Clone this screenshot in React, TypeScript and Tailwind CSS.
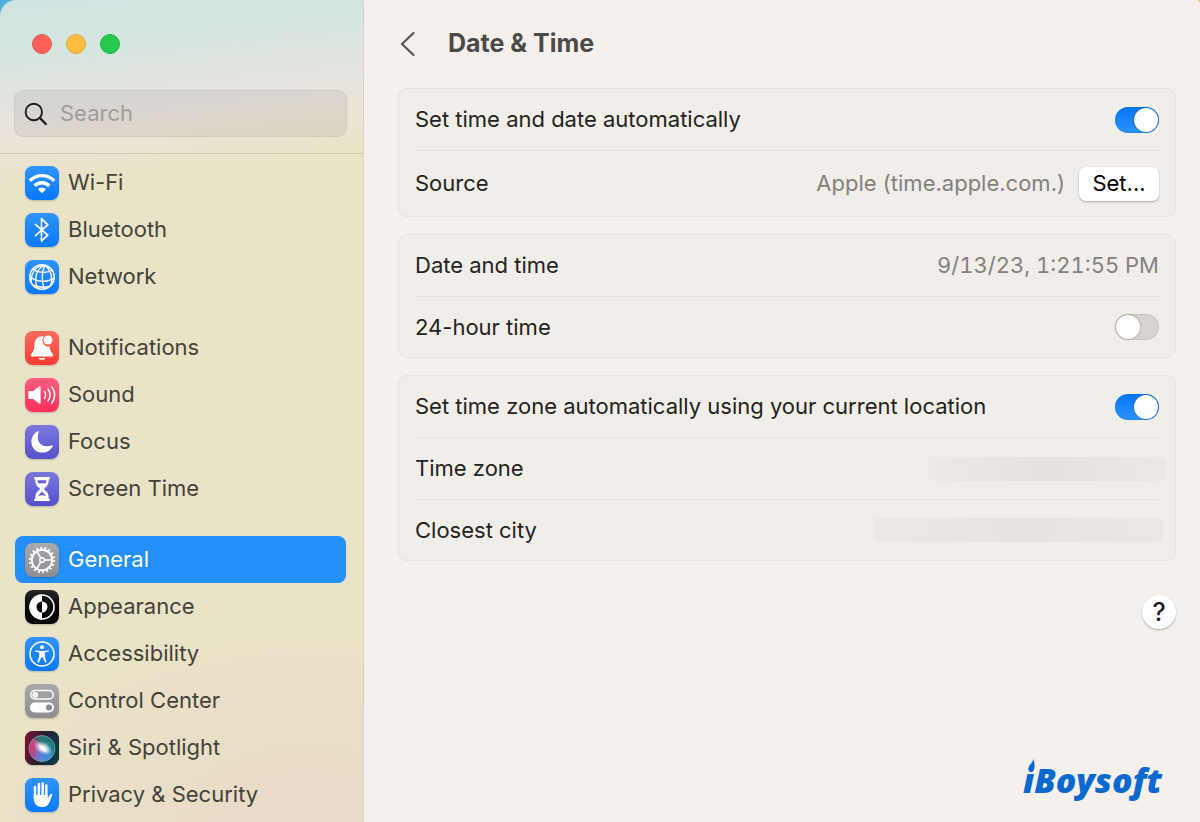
import React, { useState } from 'react';

interface NavItem {
  label: string;
  tile: string;
  icon: React.ReactNode;
}

const BLUE = 'from-[#2e93fb] to-[#0579fc]';
const RED = 'from-[#ff6a5e] to-[#fd3a30]';
const PINK = 'from-[#ff5c7f] to-[#fd2c57]';
const INDIGO = 'from-[#7b79dc] to-[#5450cc]';
const GRAY = 'from-[#a9a8ac] to-[#8e8d92]';
const BLACK = 'from-[#262626] to-[#000000]';

const WifiIcon = () => (
  <svg viewBox="0 0 34 34" className="size-full" fill="none" stroke="#fff" strokeWidth="3.4">
    <path d="M4.8 14.8a17 17 0 0 1 24.4 0" />
    <path d="M9.6 19.8a10.4 10.4 0 0 1 14.8 0" />
    <path d="M13 23.300a5.600 5.600 0 0 1 8 0L17 27.200z" fill="#fff" stroke="none" />
  </svg>
);

const BluetoothIcon = () => (
  <svg viewBox="0 0 34 34" className="size-full" fill="none" stroke="#fff" strokeWidth="1.700" strokeLinejoin="round" strokeLinecap="round">
    <path d="M10.400 11.400l12.400 10.800-6.300 6V5.600l6.300 6.200-12.400 10.800" />
  </svg>
);

const NetworkIcon = () => (
  <svg viewBox="0 0 34 34" className="size-full" fill="none" stroke="#fff" strokeWidth="1.400">
    <circle cx="17" cy="17" r="12.200" strokeWidth="1.600" />
    <path d="M20 5.400C11 8 8.500 20 12.600 28.200M20 5.400c-3.400 6-3.500 16-.8 23.500M20 5.400c6.500 5 8 14 5.600 20.300M20 5.400C12 5 6.500 11 6 21.500" />
    <path d="M8 9.300c6 4 13.500 3.700 19.600.8M4.800 16.500c7 6 17 6.300 24.200 1.600M8 25c6 2.700 12 2.800 17.600.8" />
  </svg>
);

const BellIcon = () => (
  <svg viewBox="0 0 34 34" className="size-full" fill="#fff">
    <path d="M17.500 5.200c-4.600 0-7.800 3-8 7.600-.2 5.600-1 7.400-2.800 9.400-1.400 1.500-1.200 3.300.6 3.300h19.400c1.800 0 2-1.800.6-3.300-1.500-1.700-2.400-3.200-2.700-6.800a6 6 0 0 1-5.600-9.900 9 9 0 0 0-1.500-.3z" />
    <circle cx="23" cy="9" r="4.500" />
    <path d="M13.600 26.900h6.800a3.500 2.500 0 0 1-6.800 0z" />
  </svg>
);

const SoundIcon = () => (
  <svg viewBox="0 0 34 34" className="size-full" fill="none" stroke="#fff" strokeWidth="1.500" strokeLinecap="round">
    <path d="M4.400 13h4l5.600-4.600c.8-.7 1.600-.4 1.600.5v16.200c0 .9-.8 1.200-1.600.5L8.400 21h-4c-.7 0-1-.4-1-1v-6c0-.6.3-1 1-1z" fill="#fff" stroke="none" />
    <path d="M19.400 13.300c1.500 2.300 1.500 5.100 0 7.400M23 11c2.600 3.700 2.600 8.300 0 12M26.700 8.600c3.700 5.200 3.700 11.600 0 16.800" />
  </svg>
);

const MoonIcon = () => (
  <svg viewBox="0 0 34 34" className="size-full" fill="#fff">
    <path d="M12.800 6.300c.8-.4 1.300.1 1 .9-3.600 9.500 3.300 16.300 12.800 13.200.8-.3 1.300.2.9 1C25.600 25.300 22 27.600 17.600 27.600 11.200 27.600 6.400 23 6.400 16.900c0-4.700 2.500-8.800 6.400-10.600z" />
  </svg>
);

const HourglassIcon = () => (
  <svg viewBox="0 0 34 34" className="size-full" fill="#fff">
    <path d="M10.300 5h13.400c.9 0 1.300.5 1.300 1.200s-.5 1.300-1.300 1.400c0 4.700-1.200 6.600-4 8.400-.8.500-.8 1.500 0 2 2.800 1.800 4 3.700 4 8.400.8.100 1.300.6 1.300 1.300 0 .8-.4 1.300-1.300 1.300H10.300c-.9 0-1.300-.5-1.300-1.300 0-.7.500-1.200 1.300-1.300 0-4.700 1.200-6.600 4-8.400.8-.5.8-1.500 0-2-2.800-1.800-4-3.700-4-8.400-.8-.1-1.300-.7-1.300-1.400S9.400 5 10.300 5z" />
    <path d="M12.600 8.300h8.800c-.1 1.300-.4 2.200-.9 3h-7c-.5-.8-.8-1.700-.9-3zM17 18.800c.3 1.400 1 2 2.300 3.100.9.800 1.500 1.500 1.700 2.200-2.600-1.200-5.400-1.200-8 0 .2-.7.800-1.400 1.700-2.200 1.300-1.100 2-1.700 2.300-3.100z" fill="#625fd2" />
  </svg>
);

const GearIcon = () => (
  <svg viewBox="0 0 34 34" className="size-full" fill="none" stroke="#fff">
    <circle cx="17" cy="17" r="12.200" strokeWidth="2" strokeDasharray="1.900 2.358" />
    <circle cx="17" cy="17" r="10.200" strokeWidth="1.900" />
    <circle cx="17" cy="17" r="2.300" strokeWidth="1.400" />
    <path d="M19.500 17h7M15.700 14.800l-3.600-6.200M15.700 19.200l-3.600 6.200" strokeWidth="1.600" />
  </svg>
);

const AppearanceIcon = () => (
  <svg viewBox="0 0 34 34" className="size-full">
    <circle cx="17" cy="17" r="12" fill="none" stroke="#fff" strokeWidth="1.600" />
    <path d="M17 4.600a12.400 12.400 0 0 0 0 24.800z" fill="#fff" />
    <path d="M17 11.500a5.500 5.500 0 0 0 0 11z" fill="#000" />
    <path d="M17 11.500a5.500 5.500 0 0 1 0 11z" fill="#fff" />
  </svg>
);

const AccessibilityIcon = () => (
  <svg viewBox="0 0 34 34" className="size-full" fill="#fff">
    <circle cx="17" cy="17" r="12" fill="none" stroke="#fff" strokeWidth="1.600" />
    <circle cx="17" cy="10.200" r="2" />
    <path d="M10.900 13.200c2 .6 3.800.8 6.100.8s4.100-.2 6.100-.8c1-.2 1.300 1 .4 1.400-1.200.5-2.500.8-3.800 1 0 3.500.5 5.600 1.800 9 .4 1.100-.9 1.600-1.400.6L17.400 20h-.8l-2.700 5.200c-.5 1-1.800.5-1.400-.6 1.300-3.400 1.800-5.500 1.800-9-1.300-.2-2.600-.5-3.800-1-.9-.4-.6-1.600.4-1.400z" />
  </svg>
);

const ControlCenterIcon = () => (
  <svg viewBox="0 0 34 34" className="size-full">
    <rect x="5.800" y="6.500" width="22.400" height="8.600" rx="4.300" fill="none" stroke="#fff" strokeWidth="1.500" />
    <circle cx="10.300" cy="10.800" r="2.900" fill="#fff" />
    <rect x="5" y="18.600" width="24" height="9.800" rx="4.900" fill="#fff" />
    <circle cx="24" cy="23.500" r="3.100" fill="#8e8d92" />
  </svg>
);

const SiriIcon = () => (
  <svg viewBox="0 0 34 34" className="size-full">
    <defs>
      <linearGradient id="siri-tile" x1="0" y1="0.2" x2="1" y2="0.5">
        <stop offset="0" stopColor="#7d1238" />
        <stop offset="0.5" stopColor="#2c1c30" />
        <stop offset="1" stopColor="#0b3a48" />
      </linearGradient>
      <linearGradient id="siri-orb" x1="0" y1="0.6" x2="1" y2="0.3">
        <stop offset="0" stopColor="#d8306a" />
        <stop offset="0.35" stopColor="#a75b8c" />
        <stop offset="0.65" stopColor="#3d8f9c" />
        <stop offset="1" stopColor="#12706c" />
      </linearGradient>
      <radialGradient id="siri-blue" cx="0.55" cy="0.85" r="0.5">
        <stop offset="0" stopColor="#3f8df2" />
        <stop offset="1" stopColor="#3f8df2" stopOpacity="0" />
      </radialGradient>
      <radialGradient id="siri-glow">
        <stop offset="0" stopColor="#fff" />
        <stop offset="0.3" stopColor="#fff" stopOpacity="0.85" />
        <stop offset="1" stopColor="#fff" stopOpacity="0" />
      </radialGradient>
    </defs>
    <rect width="34" height="34" rx="8" fill="url(#siri-tile)" />
    <circle cx="17" cy="17.500" r="13" fill="url(#siri-orb)" />
    <path d="M8 8C14 3 24 4 28 11c-6-1-9 1-11 6-1-5-4-7-9-9z" fill="#136a5c" opacity="0.6" />
    <circle cx="17" cy="17.500" r="13" fill="url(#siri-blue)" />
    <ellipse cx="18" cy="17" rx="10" ry="6" transform="rotate(30 18 17)" fill="url(#siri-glow)" />
    <path d="M13.500 13.500l5 2.200 3.400 5.700-5.400-2.400z" fill="#fff" opacity="0.85" />
    <circle cx="17" cy="17.500" r="13" fill="none" stroke="#7fd4d6" strokeOpacity="0.55" />
  </svg>
);

const HandIcon = () => (
  <svg viewBox="0 0 34 34" className="size-full" fill="none" stroke="#fff" strokeLinecap="round">
    <path d="M10 9v11M13.900 6v13M17.700 5.400V19M21.300 7.600V20" strokeWidth="2.500" />
    <path d="M8.750 17h13.800v3.800l2.600-4.500c.7-1.200 2.600-.5 2.100.9l-2.400 6.300c-1.400 3.700-3.800 5.500-7.500 5.500-5.400 0-8.600-3.200-8.600-8.500z" fill="#fff" stroke="none" />
  </svg>
);

const navGroups: NavItem[][] = [
  [
    { label: 'Wi-Fi', tile: BLUE, icon: <WifiIcon /> },
    { label: 'Bluetooth', tile: BLUE, icon: <BluetoothIcon /> },
    { label: 'Network', tile: BLUE, icon: <NetworkIcon /> },
  ],
  [
    { label: 'Notifications', tile: RED, icon: <BellIcon /> },
    { label: 'Sound', tile: PINK, icon: <SoundIcon /> },
    { label: 'Focus', tile: INDIGO, icon: <MoonIcon /> },
    { label: 'Screen Time', tile: INDIGO, icon: <HourglassIcon /> },
  ],
  [
    { label: 'General', tile: GRAY, icon: <GearIcon /> },
    { label: 'Appearance', tile: BLACK, icon: <AppearanceIcon /> },
    { label: 'Accessibility', tile: BLUE, icon: <AccessibilityIcon /> },
    { label: 'Control Center', tile: GRAY, icon: <ControlCenterIcon /> },
    { label: 'Siri & Spotlight', tile: BLACK, icon: <SiriIcon /> },
    { label: 'Privacy & Security', tile: BLUE, icon: <HandIcon /> },
  ],
];

interface SwitchProps {
  id: string;
  checked: boolean;
  onChange: (checked: boolean) => void;
}

const Switch: React.FC<SwitchProps> = ({ id, checked, onChange }) => (
  <input
    id={id}
    type="checkbox"
    role="switch"
    checked={checked}
    onChange={(e) => onChange(e.target.checked)}
    className="flex h-[26px] w-11 shrink-0 appearance-none items-center rounded-full bg-[#d7d3ce] px-px shadow-[inset_0_0_1px_1px_rgba(0,0,0,0.08)] before:size-6 before:rounded-full before:bg-white before:shadow-[0_0_2px_rgba(0,0,0,0.4)] checked:justify-end checked:bg-linear-to-b checked:from-[#0077f9] checked:to-[#2a91ff]"
  />
);

const Card: React.FC<{ children: React.ReactNode }> = ({ children }) => (
  <section className="divide-y divide-[#e5e1dd] rounded-[9px] border border-[#e6e2de] bg-[#f1ede8] px-4">
    {children}
  </section>
);

const rowClass = 'flex min-h-[62px] items-center justify-between gap-4 last:min-h-[60px]';

const Sidebar: React.FC = () => {
  const [selected, setSelected] = useState('General');

  return (
    <aside className="w-[364px] shrink-0 border-r border-[#d9d3c4] bg-[radial-gradient(ellipse_380px_220px_at_85%_100%,#e9dcc8_20%,#e9dcc800_100%),linear-gradient(174deg,#cfe5e2_0px,#d5e5df_50px,#e2e4de_100px,#e8e3dd_125px,#ebe4d5_150px,#e9e3c8_180px,#e9e4c7_210px)]">
      {/* Window controls */}
      <div className="flex h-[88px] items-center gap-3.5 px-8">
        <button aria-label="Close" className="size-5 rounded-full border border-[#e2574f] bg-[#ff5f57]" />
        <button aria-label="Minimize" className="size-5 rounded-full border border-[#e2a63a] bg-[#febc3e]" />
        <button aria-label="Zoom" className="size-5 rounded-full border border-[#1fb243] bg-[#25c950]" />
      </div>

      {/* Search */}
      <div className="border-b border-[#cfcab4] pt-0.5 pr-4 pb-4 pl-3.5">
        <div className="flex h-[47px] items-center gap-3 rounded-[9px] border border-black/5 bg-black/6 pr-3 pl-[9px]">
          <svg viewBox="0 0 24 24" className="size-6 shrink-0" fill="none" stroke="#1d1d1b" strokeLinecap="round">
            <circle cx="9.800" cy="10" r="8.200" strokeWidth="1.900" />
            <path d="M16 16.200l5.800 5.800" strokeWidth="2.400" />
          </svg>
          <input
            type="text"
            placeholder="Search"
            aria-label="Search"
            className="min-w-0 flex-1 bg-transparent text-[22px] text-[#454239] outline-none placeholder:text-[#a09d98]"
          />
        </div>
      </div>

      {/* Navigation */}
      <nav className="flex flex-col gap-6 pt-[5px] pr-[17px] pb-1 pl-[15px]">
        {navGroups.map((group) => (
          <ul key={group[0].label}>
            {group.map((item) => (
              <li key={item.label}>
                <button
                  onClick={() => setSelected(item.label)}
                  aria-current={selected === item.label ? 'page' : undefined}
                  className="flex h-[47px] w-full items-center gap-[9px] rounded-lg px-2.5 text-left text-[22px] text-[#454239] aria-[current=page]:bg-[#248ff8] aria-[current=page]:text-white"
                >
                  <span className={`size-[34px] shrink-0 overflow-hidden rounded-lg bg-linear-to-b shadow-[0_1px_2px_rgba(0,0,0,0.2)] ${item.tile}`}>
                    {item.icon}
                  </span>
                  {item.label}
                </button>
              </li>
            ))}
          </ul>
        ))}
      </nav>
    </aside>
  );
};

const App: React.FC = () => {
  const [autoTime, setAutoTime] = useState(true);
  const [use24Hour, setUse24Hour] = useState(false);
  const [autoZone, setAutoZone] = useState(true);

  return (
    <div className="min-h-screen bg-linear-to-r from-[#4fb0de] from-50% to-[#d9bd72] to-50% font-[Inter,'Noto_Sans',sans-serif]">
      <div className="flex min-h-screen overflow-hidden rounded-tl-2xl rounded-tr-sm">
        <Sidebar />

        <main className="flex min-w-0 flex-1 flex-col bg-[#f5f0eb] pr-6 pl-[34px] text-[22px] text-[#242321]">
          <header className="flex h-[88px] items-center gap-8">
            <button aria-label="Back">
              <svg viewBox="0 0 18 26" className="h-[26px] w-[18px]" fill="none" stroke="#5c5a57" strokeWidth="2.400" strokeLinecap="round" strokeLinejoin="round">
                <path d="M15.500 2L4 13l11.500 11" />
              </svg>
            </button>
            <h1 className="text-[25px] font-bold text-[#4c4a48]">Date &amp; Time</h1>
          </header>

          <div className="flex flex-col gap-[17px]">
            <Card>
              <div className={rowClass}>
                <label htmlFor="auto-time">Set time and date automatically</label>
                <Switch id="auto-time" checked={autoTime} onChange={setAutoTime} />
              </div>
              <div className="flex min-h-[65px] items-center justify-between gap-4">
                <span>Source</span>
                <div className="flex items-center gap-3.5">
                  <span className="text-[#84817d]">Apple (time.apple.com.)</span>
                  <button className="h-[34px] w-20 rounded-[7px] bg-white text-black shadow-[0_1px_2px_rgba(0,0,0,0.3)]">Set...</button>
                </div>
              </div>
            </Card>

            <Card>
              <div className={rowClass}>
                <span>Date and time</span>
                <span className="text-[#84817d] tabular-nums">9/13/23, 1:21:55 PM</span>
              </div>
              <div className={rowClass}>
                <label htmlFor="use-24-hour">24-hour time</label>
                <Switch id="use-24-hour" checked={use24Hour} onChange={setUse24Hour} />
              </div>
            </Card>

            <Card>
              <div className={rowClass}>
                <label htmlFor="auto-zone">Set time zone automatically using your current location</label>
                <Switch id="auto-zone" checked={autoZone} onChange={setAutoZone} />
              </div>
              <div className={rowClass}>
                <span>Time zone</span>
                <span className="-mr-2 h-6 w-60 bg-linear-to-r from-[#edeae5] via-[#e5e1dd] to-[#ece9e4]" />
              </div>
              <div className={rowClass}>
                <span>Closest city</span>
                <span className="-mr-1 h-6 w-72 bg-linear-to-r from-[#ece9e4] via-[#e7e3de] to-[#ebe7e3]" />
              </div>
            </Card>
          </div>

          <button aria-label="Help" className="mt-[34px] size-[34px] self-end rounded-full bg-white text-[25px] leading-none font-medium text-[#1d1d1b] shadow-[0_1px_2px_rgba(0,0,0,0.3)]">
            ?
          </button>

          {/* Brand mark, with a flame over the first letter */}
          <div className="relative mt-auto mr-3.5 mb-5 self-end font-['Open_Sans',sans-serif] text-[34px] leading-11 font-extrabold text-[#0a69d1] italic">
            iBoysoft
            <svg viewBox="0 0 14 16" className="absolute top-0 left-0.5 h-4 w-3.5">
              <rect y="4" width="13" height="11" fill="#f5f0eb" />
              <path d="M8.500 1C9.500 5 10.200 8 9 11.500c-.8 2.300-2.300 3-3.800 2.500C3 13.200 2.800 10.500 4 8.400 5.200 6.200 7.500 4.500 8.500 1z" fill="#0a69d1" />
            </svg>
          </div>
        </main>
      </div>
    </div>
  );
};

export default App;
